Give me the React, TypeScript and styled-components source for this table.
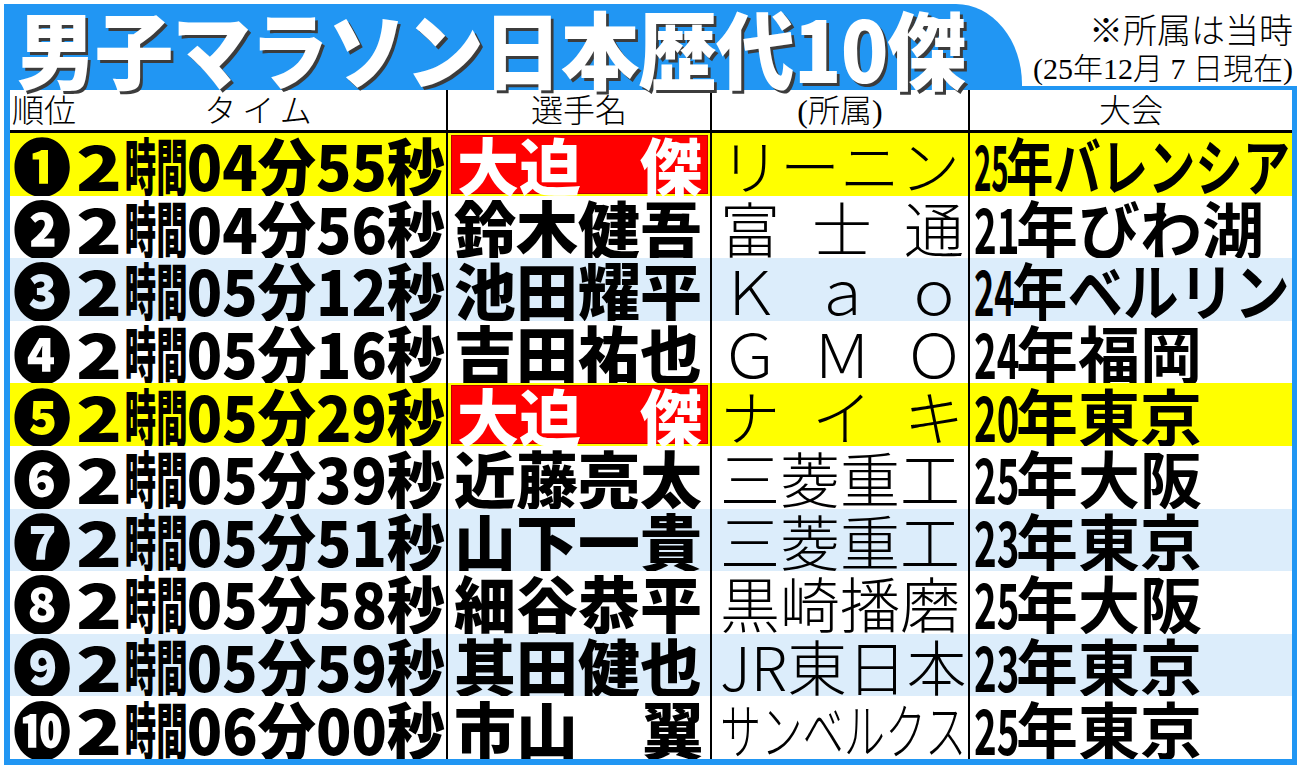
import React, { useLayoutEffect, useRef, useState } from 'react';
import styled, { createGlobalStyle } from 'styled-components';

const BLUE = '#2196f3';
const PALE = '#dcedfb';
const YELLOW = '#ffff00';
const COLS = '436px 264px 258px 1fr';

const GlobalStyle = createGlobalStyle`
  html, body {
    margin: 0;
    padding: 0;
    background: #fff;
  }
  body {
    font-family: "Noto Sans CJK JP", "Noto Sans", sans-serif;
    color: #000;
  }
`;

type Row = {
  rank: string;
  min: string;
  sec: string;
  name: string;
  team: string;
  year: string;
  race: string;
};

const rows: Row[] = [
  { rank: '❶', min: '04', sec: '55', name: '大迫 傑', team: 'リーニン', year: '25', race: 'バレンシア' },
  { rank: '❷', min: '04', sec: '56', name: '鈴木健吾', team: '富 士 通', year: '21', race: 'びわ湖' },
  { rank: '❸', min: '05', sec: '12', name: '池田耀平', team: 'Ｋ ａ ｏ', year: '24', race: 'ベルリン' },
  { rank: '❹', min: '05', sec: '16', name: '吉田祐也', team: 'Ｇ Ｍ Ｏ', year: '24', race: '福岡' },
  { rank: '❺', min: '05', sec: '29', name: '大迫 傑', team: 'ナ イ キ', year: '20', race: '東京' },
  { rank: '❻', min: '05', sec: '39', name: '近藤亮太', team: '三菱重工', year: '25', race: '大阪' },
  { rank: '❼', min: '05', sec: '51', name: '山下一貴', team: '三菱重工', year: '23', race: '東京' },
  { rank: '❽', min: '05', sec: '58', name: '細谷恭平', team: '黒崎播磨', year: '25', race: '大阪' },
  { rank: '❾', min: '05', sec: '59', name: '其田健也', team: 'JR東日本', year: '23', race: '東京' },
  { rank: '❿', min: '06', sec: '00', name: '市山 翼', team: 'サンベルクス', year: '25', race: '東京' },
];

// 大迫's two records are the highlighted rows
const isStar = (r: Row) => r.name === '大迫 傑';

const FitOuter = styled.span`
  display: inline-block;
  white-space: nowrap;
  vertical-align: top;
`;

const FitInner = styled.span`
  display: inline-block;
  white-space: nowrap;
  vertical-align: top;
  transform-origin: left center;
`;

// squeezes its text horizontally so it never runs wider than max
function Fit({ max, children }: { max: number; children: React.ReactNode }) {
  const ref = useRef<HTMLSpanElement>(null);
  const [box, setBox] = useState<{ k: number; w: number } | null>(null);

  useLayoutEffect(() => {
    const measure = () => {
      const el = ref.current;
      if (!el) return;
      const natural = el.offsetWidth;
      const k = natural > max ? max / natural : 1;
      setBox({ k, w: natural * k });
    };
    measure();
    if (document.fonts) document.fonts.ready.then(measure);
  }, [max]);

  return (
    <FitOuter style={box ? { width: box.w } : undefined}>
      <FitInner ref={ref} style={box ? { transform: `scaleX(${box.k})` } : undefined}>
        {children}
      </FitInner>
    </FitOuter>
  );
}

const Page = styled.div`
  padding: 4px 3px 0 4px;
`;

const Panel = styled.div`
  height: 761px;
  display: flex;
  flex-direction: column;
  overflow: hidden;
`;

const TopBar = styled.div`
  height: 82px;
  flex: none;
  display: flex;
`;

const TitleTab = styled.div`
  width: 1018px;
  background: ${BLUE};
  border-top-right-radius: 66px 80px;
  display: flex;
  align-items: center;
  padding-left: 13px;
  box-sizing: border-box;
`;

const Title = styled.h1`
  margin: 4px 0 0;
  font-size: 84px;
  font-weight: 900;
  line-height: 1;
  color: #fff;
  text-shadow: 3px 3px 0 #3c3c3c;
  letter-spacing: -1px;
`;

const Note = styled.div`
  flex: 1;
  display: flex;
  flex-direction: column;
  align-items: flex-end;
  justify-content: flex-end;
  padding-right: 4px;
  font-family: "Liberation Serif", "Noto Sans CJK JP", serif;
  font-weight: 300;
`;

const NoteLine = styled.div<{ $size: number }>`
  font-size: ${(p) => p.$size}px;
  line-height: ${(p) => p.$size + 5}px;
  white-space: nowrap;
`;

const Table = styled.div`
  flex: 1;
  min-height: 0;
  display: flex;
  flex-direction: column;
  border-style: solid;
  border-color: ${BLUE};
  border-width: 4px 5px 6px 6px;
`;

const HeaderRow = styled.div`
  height: 40px;
  flex: none;
  display: grid;
  grid-template-columns: ${COLS};
  border-bottom: 3px solid #000;
  background: #fff;
`;

const HeadCell = styled.div<{ $first?: boolean }>`
  display: flex;
  align-items: center;
  justify-content: center;
  border-left: ${(p) => (p.$first ? 'none' : '2px solid #000')};
  font-family: "Liberation Serif", "Noto Sans CJK JP", serif;
  font-size: 32px;
  font-weight: 300;
  line-height: 1;
  padding-top: 2px;
`;

const HeadLeft = styled.span`
  padding-left: 2px;
`;

const HeadCenter = styled.span<{ $spaced?: boolean }>`
  flex: 1;
  text-align: center;
  letter-spacing: ${(p) => (p.$spaced ? '6px' : '0')};
`;

const Body = styled.div`
  flex: 1;
  min-height: 0;
  display: grid;
  grid-template-rows: repeat(10, minmax(0, 1fr));
`;

const BodyRow = styled.div<{ $bg: string }>`
  display: grid;
  grid-template-columns: ${COLS};
  background: ${(p) => p.$bg};
  min-height: 0;
`;

const Cell = styled.div<{ $first?: boolean }>`
  display: flex;
  align-items: center;
  min-height: 0;
  border-left: ${(p) => (p.$first ? 'none' : '2px solid #000')};
  overflow: hidden;
  line-height: 1;
`;

const TimeCell = styled(Cell)`
  padding-left: 3px;
  font-size: 62px;
  font-weight: 900;
`;

const Rank = styled.span`
  margin-right: 5px;
`;

const Gap = styled.span`
  display: inline-block;
  width: 6px;
`;

const Narrow = styled.span<{ $w: number; $k: number }>`
  display: inline-block;
  vertical-align: top;
  width: ${(p) => p.$w}px;
  white-space: nowrap;
  transform: scaleX(${(p) => p.$k});
  transform-origin: left center;
`;

const NameCell = styled(Cell)`
  padding: 0 6px 0 6px;
`;

const RedBox = styled.div`
  flex: 1;
  align-self: stretch;
  margin: 2px -4px 2px -3px;
  padding: 0 5px 0 5px;
  background: #ff0000;
  border: 1px solid #c40000;
  display: flex;
  align-items: center;
  color: #fff;
`;

const NameText = styled.div`
  flex: 1;
  display: flex;
  justify-content: space-between;
  font-size: 62px;
  font-weight: 900;
`;

const TeamCell = styled(Cell)`
  padding: 0 4px 0 8px;
  font-size: 60px;
  font-weight: 300;
`;

const Spread = styled.div`
  flex: 1;
  display: flex;
  justify-content: space-between;
`;

const RaceCell = styled(Cell)`
  padding-left: 4px;
  font-size: 62px;
  font-weight: 700;
`;

function Name({ name }: { name: string }) {
  return (
    <NameText>
      {name.split(' ').map((part) => (
        <span key={part}>{part}</span>
      ))}
    </NameText>
  );
}

function Team({ team }: { team: string }) {
  if (team.includes(' ')) {
    return (
      <Spread>
        {team.split(' ').map((c) => (
          <span key={c}>{c}</span>
        ))}
      </Spread>
    );
  }
  return <Fit max={246}>{team}</Fit>;
}

export default function App() {
  return (
    <>
      <GlobalStyle />
      <Page>
        <Panel>
          <TopBar>
            <TitleTab>
              <Title>
                <Fit max={948}>男子マラソン日本歴代10傑</Fit>
              </Title>
            </TitleTab>
            <Note>
              <NoteLine $size={34}>※所属は当時</NoteLine>
              <NoteLine $size={30}>
                <Fit max={266}>(25年12月 7 日現在)</Fit>
              </NoteLine>
            </Note>
          </TopBar>

          <Table>
            <HeaderRow>
              <HeadCell $first>
                <HeadLeft>順位</HeadLeft>
                <HeadCenter $spaced>タイム</HeadCenter>
              </HeadCell>
              <HeadCell>選手名</HeadCell>
              <HeadCell>(所属)</HeadCell>
              <HeadCell>大会</HeadCell>
            </HeaderRow>

            <Body>
              {rows.map((r, i) => {
                const bg = isStar(r) ? YELLOW : i % 2 === 0 ? PALE : '#fff';
                return (
                  <BodyRow key={r.rank} $bg={bg}>
                    <TimeCell $first>
                      <Fit max={432}>
                        <Rank>{r.rank}</Rank>
                        <Narrow $w={46} $k={1.3}>2</Narrow>
                        <Gap />
                        <Narrow $w={66} $k={0.54}>時間</Narrow>
                        {r.min}分{r.sec}秒
                      </Fit>
                    </TimeCell>
                    <NameCell>
                      {isStar(r) ? (
                        <RedBox>
                          <Name name={r.name} />
                        </RedBox>
                      ) : (
                        <Name name={r.name} />
                      )}
                    </NameCell>
                    <TeamCell>
                      <Team team={r.team} />
                    </TeamCell>
                    <RaceCell>
                      <Fit max={316}>
                        <Narrow $w={42} $k={0.62}>{r.year}</Narrow>年{r.race}
                      </Fit>
                    </RaceCell>
                  </BodyRow>
                );
              })}
            </Body>
          </Table>
        </Panel>
      </Page>
    </>
  );
}
